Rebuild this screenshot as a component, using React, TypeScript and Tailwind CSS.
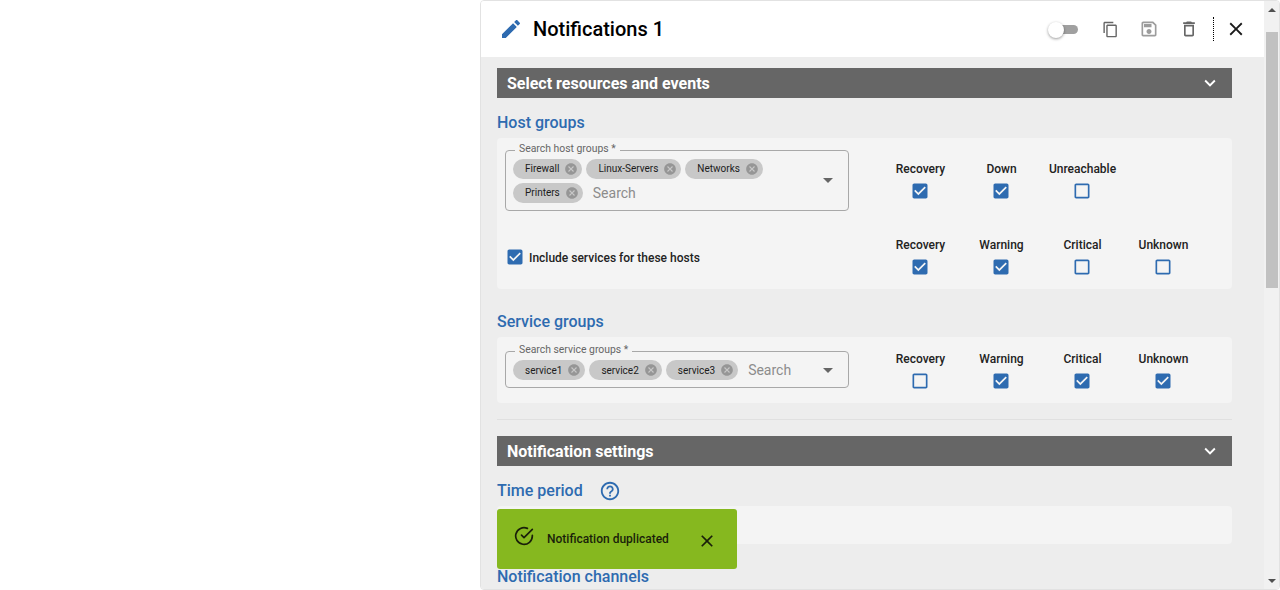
import type { ReactNode } from "react";

const PENCIL = "M3 17.25V21h3.75L17.81 9.94l-3.75-3.75L3 17.25zM20.71 7.04c.39-.39.39-1.02 0-1.41l-2.34-2.34c-.39-.39-1.02-.39-1.41 0l-1.83 1.83 3.75 3.75 1.83-1.83z";
const COPY = "M16 1H4c-1.1 0-2 .9-2 2v14h2V3h12V1zm3 4H8c-1.1 0-2 .9-2 2v14c0 1.1.9 2 2 2h11c1.1 0 2-.9 2-2V7c0-1.1-.9-2-2-2zm0 16H8V7h11v14z";
const SAVE = "M17 3H5c-1.11 0-2 .9-2 2v14c0 1.1.89 2 2 2h14c1.1 0 2-.9 2-2V7l-4-4zm2 16H5V5h11.17L19 7.83V19zm-7-7c-1.66 0-3 1.34-3 3s1.34 3 3 3 3-1.34 3-3-1.34-3-3-3zM6 6h9v4H6z";
const TRASH = "M6 19c0 1.1.9 2 2 2h8c1.1 0 2-.9 2-2V7H6v12zM8 9h8v10H8V9zm7.5-5l-1-1h-5l-1 1H5v2h14V4z";
const CLOSE = "M19 6.41 17.59 5 12 10.59 6.41 5 5 6.41 10.59 12 5 17.59 6.41 19 12 13.41 17.59 19 19 17.59 13.41 12z";
const EXPAND = "M16.59 8.59 12 13.17 7.41 8.59 6 10l6 6 6-6z";
const CANCEL = "M12 2C6.47 2 2 6.47 2 12s4.47 10 10 10 10-4.47 10-10S17.53 2 12 2zm5 13.59L15.59 17 12 13.41 8.41 17 7 15.59 10.59 12 7 8.41 8.41 7 12 10.59 15.59 7 17 8.41 13.41 12 17 15.59z";
const CHECKED = "M19 3H5c-1.11 0-2 .9-2 2v14c0 1.1.89 2 2 2h14c1.1 0 2-.9 2-2V5c0-1.1-.9-2-2-2zm-9 14-5-5 1.41-1.41L10 14.17l7.59-7.59L19 8l-9 9z";
const BLANK = "M19 5v14H5V5h14m0-2H5c-1.1 0-2 .9-2 2v14c0 1.1.9 2 2 2h14c1.1 0 2-.9 2-2V5c0-1.1-.9-2-2-2z";
const HELP = "M11 18h2v-2h-2v2zm1-16C6.48 2 2 6.48 2 12s4.48 10 10 10 10-4.48 10-10S17.52 2 12 2zm0 18c-4.41 0-8-3.59-8-8s3.59-8 8-8 8 3.59 8 8-3.59 8-8 8zm0-14c-2.21 0-4 1.79-4 4h2c0-1.1.9-2 2-2s2 .9 2 2c0 2-3 1.75-3 5h2c0-2.25 3-2.5 3-5 0-2.21-1.79-4-4-4z";

const Icon = ({ d, className }: { d: string; className: string }) => (
  <svg viewBox="0 0 24 24" fill="currentColor" className={className}>
    <path d={d} />
  </svg>
);

const Box = ({ on }: { on: boolean }) => (
  <Icon d={on ? CHECKED : BLANK} className="w-5 h-5 text-[#2e6bb0]" />
);

const SectionBar = ({ title }: { title: string }) => (
  <div className="h-[30px] bg-[#666666] flex items-center justify-between pl-[10px] pr-[11px] text-white">
    <span className="pt-[2px] text-[16px] leading-[22px] font-bold">{title}</span>
    <Icon d={EXPAND} className="w-[22px] h-[22px]" />
  </div>
);

const SubTitle = ({ children, className }: { children: ReactNode; className: string }) => (
  <div className={`text-[16px] leading-[20px] font-medium text-[#2e6bb0] ${className}`}>{children}</div>
);

const Chip = ({ label }: { label: string }) => (
  <span className="h-5 rounded-full bg-[#c8c8c8] flex items-center pl-3 pr-1 gap-[5px] text-[10px] text-[#1c1c1c]">
    {label}
    <Icon d={CANCEL} className="w-[14px] h-[14px] text-[#969696]" />
  </span>
);

const ChipSelect = ({ label, chips, className }: { label: string; chips: string[]; className: string }) => (
  <div className={`relative w-[344px] border border-[#a8a8a8] rounded-[4px] flex items-center pl-[7px] pr-[15px] ${className}`}>
    <span className="absolute left-[9px] top-[-9px] px-1 bg-[#f4f4f4] text-[10.4px] leading-[14px] text-[#666666]">{label}</span>
    <div className="flex-1 flex flex-wrap items-center gap-x-1 gap-y-1">
      {chips.map((c) => (
        <Chip key={c} label={c} />
      ))}
      <span className="ml-[6px] text-[14px] leading-5 text-[#8c8c8c]">Search</span>
    </div>
    <svg viewBox="0 0 10 5" className="w-[10px] h-[5px] fill-[#666666]">
      <path d="M0 0h10L5 5z" />
    </svg>
  </div>
);

const Checks = ({ items }: { items: [string, boolean][] }) => (
  <div className="grid grid-cols-[repeat(4,81px)] w-[324px]">
    {items.map(([label, on]) => (
      <div key={label} className="flex flex-col items-center gap-1 text-[12px] leading-[16px] font-medium text-[#222222]">
        <span>{label}</span>
        <span className="pr-[1px]">
          <Box on={on} />
        </span>
      </div>
    ))}
  </div>
);

export default function App() {
  return (
    <div className="h-[590px] overflow-hidden bg-white font-['Roboto',sans-serif]">
      <div className="ml-[480px] h-[590px] flex border border-[#e2e2e2] rounded-[4px] overflow-hidden">
        <div className="relative flex-1 min-w-0 bg-[#ededed] overflow-hidden">
          <header className="h-[56px] bg-white flex items-center pl-[18px] text-black">
            <Icon d={PENCIL} className="w-6 h-6 text-[#2e6bb0]" />
            <h1 className="ml-[10px] text-[20px] font-medium">Notifications 1</h1>
            <div className="ml-auto flex items-center">
              <div className="relative w-[22px] h-[9px] rounded-full bg-[#a0a0a0] mr-[24px]">
                <span className="absolute left-[-8px] top-[-3px] w-4 h-4 rounded-full bg-white shadow-[0_1px_3px_rgba(0,0,0,0.4)]" />
              </div>
              <Icon d={COPY} className="w-[17px] h-[17px] text-[#666666]" />
              <Icon d={SAVE} className="ml-[20px] w-[20px] h-[20px] text-[#9c9c9c]" />
              <Icon d={TRASH} className="ml-[20px] w-[20px] h-[20px] text-[#666666]" />
              <span className="ml-[14px] h-6 border-l border-dotted border-black" />
              <Icon d={CLOSE} className="ml-[11px] mr-[17px] w-[22px] h-[22px] text-[#1a1a1a]" />
            </div>
          </header>

          <div className="pl-4 pr-8 pt-[11px]">
            <SectionBar title="Select resources and events" />
            <SubTitle className="mt-[15px]">Host groups</SubTitle>
            <section className="mt-[5px] h-[151px] rounded-[4px] bg-[#f4f4f4] grid grid-cols-[383px_1fr] grid-rows-[87px_1fr] pl-2 pt-3">
              <ChipSelect
                label="Search host groups *"
                chips={["Firewall", "Linux-Servers", "Networks", "Printers"]}
                className="h-[61px] self-start"
              />
              <div className="pt-[11px] -ml-[8px]">
                <Checks items={[["Recovery", true], ["Down", true], ["Unreachable", false]]} />
              </div>
              <label className="flex items-center gap-1 text-[12px] font-medium text-[#222222] h-[40px]">
                <Box on />
                <span className="pt-[1px]">Include services for these hosts</span>
              </label>
              <div className="-ml-[8px]">
                <Checks items={[["Recovery", true], ["Warning", true], ["Critical", false], ["Unknown", false]]} />
              </div>
            </section>

            <SubTitle className="mt-[23px]">Service groups</SubTitle>
            <section className="mt-[5px] h-[66px] rounded-[4px] bg-[#f4f4f4] grid grid-cols-[383px_1fr] pl-2">
              <div className="pt-[14px]">
                <ChipSelect label="Search service groups *" chips={["service1", "service2", "service3"]} className="h-[37px] pt-[1px]" />
              </div>
              <div className="pt-[14px] -ml-[8px]">
                <Checks items={[["Recovery", false], ["Warning", true], ["Critical", true], ["Unknown", true]]} />
              </div>
            </section>

            <div className="mt-4 mb-4 border-t border-[#e0e0e0]" />

            <SectionBar title="Notification settings" />
            <div className="mt-[14px] flex items-center gap-4">
              <SubTitle className="">Time period</SubTitle>
              <Icon d={HELP} className="w-[22px] h-[22px] text-[#2e6bb0]" />
            </div>
            <section className="mt-1 h-[38px] rounded-[4px] bg-[#f4f4f4]" />
            <SubTitle className="mt-[23px]">Notification channels</SubTitle>
          </div>

          {/* toast */}
          <div className="absolute left-4 top-[508px] w-[240px] h-[60px] rounded-[3px] bg-[#86b81f] flex items-start text-[#1a1f0a]">
            <svg viewBox="0 0 24 24" fill="none" stroke="currentColor" strokeWidth="2" strokeLinecap="round" strokeLinejoin="round" className="ml-[17px] mt-[17px] w-5 h-5">
              <path d="M22 11.08V12a10 10 0 1 1-5.93-9.14" />
              <path d="M22 4 12 14.01l-3-3" />
            </svg>
            <span className="ml-[13px] mt-[22px] text-[12px] leading-[16px] font-medium">Notification duplicated</span>
            <Icon d={CLOSE} className="ml-[28px] mt-[22px] w-5 h-5" />
          </div>
        </div>

        {/* scrollbar */}
        <div className="w-[15px] bg-[#f1f1f1] flex flex-col items-center">
          <svg viewBox="0 0 8 4" className="mt-[7px] w-2 h-1 fill-[#505050]">
            <path d="M4 0l4 4H0z" />
          </svg>
          <div className="mt-[20px] w-3 h-[256px] bg-[#c1c1c1]" />
          <svg viewBox="0 0 8 4" className="mt-auto mb-[6px] w-2 h-1 fill-[#505050]">
            <path d="M0 0h8L4 4z" />
          </svg>
        </div>
      </div>
    </div>
  );
}
